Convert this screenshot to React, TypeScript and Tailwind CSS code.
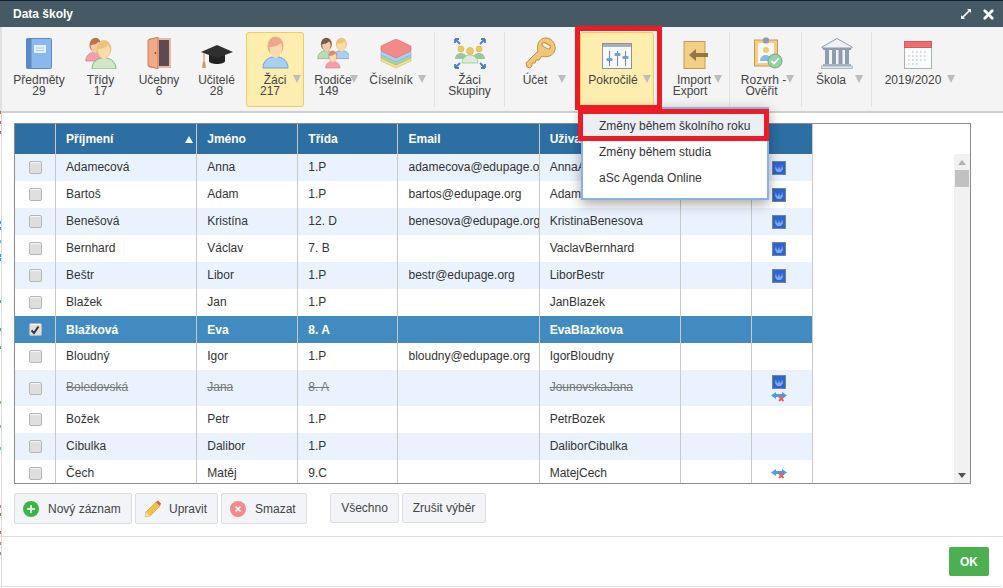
import type { ReactNode } from "react";
import { X } from "lucide-react";

const font = { fontFamily: '"Liberation Sans", Arial, sans-serif' };

function Person({ x, y, s, skin, hair, body, line }: { x: number; y: number; s: number; skin: string; hair: string; body: string; line: string }) {
  return (
    <g transform={`translate(${x} ${y}) scale(${s})`}>
      <path d="M1 30c0-7 5-10 9-11h6c4 1 9 4 9 11z" fill={body} stroke={line} strokeWidth="1" />
      <ellipse cx="13" cy="10" rx="7.5" ry="9" fill={hair} />
      <path d="M7 10c3 0 8-1 10-4 1 2 2 3 2 5 0 5-3 9-6 9s-6-5-6-10z" fill={skin} />
    </g>
  );
}

const BookIcon = () => (
  <svg width="26" height="31" viewBox="0 0 26 31">
    <rect x="0.5" y="0.5" width="25" height="30" rx="1" fill="#8ab7ee" stroke="#5a8ac6" />
    <rect x="0.5" y="0.5" width="5" height="30" fill="#5a8ac6" />
    <rect x="8" y="7" width="12" height="8" fill="#e8f1fb" />
    <path d="M10 10h8M10 12.5h8" stroke="#a9c7ea" />
  </svg>
);

const ClassIcon = () => (
  <svg width="32" height="32" viewBox="0 0 32 32">
    <Person x={0} y={0} s={0.8} skin="#f6c9a8" hair="#b8764a" body="#f0a0a8" line="#d9808a" />
    <Person x={6} y={2} s={1} skin="#fbdca8" hair="#edc27a" body="#cfe8c8" line="#7fb27f" />
  </svg>
);

const DoorIcon = () => (
  <svg width="24" height="32" viewBox="0 0 24 32">
    <rect x="2" y="1" width="22" height="30" fill="#e6b9a6" />
    <rect x="12" y="3" width="10" height="26" fill="#5f4a4f" />
    <path d="M1 3 11 0v32L1 29z" fill="#f2a987" stroke="#b96f4f" strokeWidth="0.8" />
    <circle cx="8.5" cy="16" r="0.9" fill="#7a4632" />
  </svg>
);

const CapIcon = () => (
  <svg width="32" height="26" viewBox="0 0 32 26">
    <path d="M8 11v7c0 2 4 3 8 3s8-1 8-3v-7z" fill="#222" />
    <path d="M16 2 32 9 16 15 0 9z" fill="#2f2f2f" />
    <path d="M3 10v9" stroke="#b98a52" strokeWidth="1" />
    <path d="M1.8 19h2.4l.6 6H1.200z" fill="#c79a60" />
  </svg>
);

const StudentIcon = () => (
  <svg width="27" height="33" viewBox="0 0 27 33">
    <path d="M1 32c0-7 5-10 9-11h7c4 1 9 4 9 11z" fill="#a9cff2" stroke="#6ea0d2" />
    <ellipse cx="13.500" cy="10" rx="8" ry="9.500" fill="#eba98c" />
    <path d="M7.500 11c3 0 9-1 11-4 1 1 1.500 3 1.500 5 0 5-3 10-6.500 10S7.500 17 7.500 11z" fill="#fbdca8" />
  </svg>
);

const ParentsIcon = () => (
  <svg width="32" height="32" viewBox="0 0 32 32">
    <Person x={0} y={0} s={0.72} skin="#f6c9a8" hair="#7c5a44" body="#b7dcb8" line="#7fb27f" />
    <Person x={15} y={0} s={0.72} skin="#fbdca8" hair="#edc27a" body="#a9cff2" line="#6ea0d2" />
    <Person x={8} y={13} s={0.6} skin="#fbdca8" hair="#d98c6a" body="#f0a0a8" line="#d9808a" />
  </svg>
);

const StackIcon = () => (
  <svg width="32" height="30" viewBox="0 0 32 30">
    <path d="M16 12 31 19v3L16 29 1 22v-3z" fill="#f4e08a" stroke="#d5bd5a" strokeWidth="0.6" />
    <path d="M16 9 31 16v3L16 26 1 19v-3z" fill="#a8d5a8" stroke="#84b884" strokeWidth="0.6" />
    <path d="M16 6 31 13v3L16 23 1 16v-3z" fill="#a9cff2" stroke="#7fabd6" strokeWidth="0.6" />
    <path d="M16 0 31 7v5L16 19 1 12V7z" fill="#f28a8a" stroke="#d96a6a" strokeWidth="0.6" />
  </svg>
);

const GroupsIcon = () => (
  <svg width="32" height="31" viewBox="0 0 32 31">
    <path d="M1 1l5 5M1 1h4M1 1v4M31 1l-5 5M31 1h-4M31 1v4M1 30l5-5M1 30h4M1 30v-4M31 30l-5-5M31 30h-4M31 30v-4" stroke="#4a7fc0" strokeWidth="1.800" fill="none" />
    <circle cx="7" cy="11" r="3" fill="#edc95e" stroke="#c9a53e" strokeWidth="0.5" />
    <circle cx="16" cy="13" r="3.500" fill="#edc95e" stroke="#c9a53e" strokeWidth="0.5" />
    <circle cx="25" cy="11" r="3" fill="#edc95e" stroke="#c9a53e" strokeWidth="0.5" />
    <path d="M1 21c0-4 3-6 6-6s6 2 6 6zM19 21c0-4 3-6 6-6s6 2 6 6z" fill="#9cc79c" />
    <path d="M8 25c0-5 4-8 8-8s8 3 8 8z" fill="#d8eed8" stroke="#8fbf8f" strokeWidth="0.7" />
  </svg>
);

const KeyIcon = () => (
  <svg width="31" height="32" viewBox="0 0 31 32">
    <path d="M12 15 1 26l1 4 3 1 2-2v-3h3l1-3h3l3-4c5 2 11 0 13-6 1-5-2-11-8-12-7-1-11 6-9 14z" fill="#f0c677" stroke="#bd9243" />
    <rect x="17" y="6.500" width="9" height="4" rx="2" transform="rotate(30 21 8)" fill="#f4f4f4" stroke="#bd9243" />
  </svg>
);

const SlidersIcon = () => (
  <svg width="30" height="26" viewBox="0 0 30 26">
    <rect x="0.500" y="0.500" width="29" height="25" fill="#f6f8fb" stroke="#8b95a1" />
    <rect x="1" y="1" width="28" height="3" fill="#a7aeb8" />
    <path d="M7.500 8v15M15.500 8v15M23.500 8v15" stroke="#7d8794" />
    <rect x="4.500" y="15" width="6" height="3" rx="1" fill="#6ba0d8" />
    <rect x="12.500" y="10" width="6" height="3" rx="1" fill="#6ba0d8" />
    <rect x="20.500" y="13" width="6" height="3" rx="1" fill="#6ba0d8" />
  </svg>
);

const ImportIcon = () => (
  <svg width="26" height="28" viewBox="0 0 26 28">
    <rect x="1" y="0.500" width="21" height="27" fill="#f3cf86" stroke="#c49a52" />
    <path d="M6 14l7-6v4h12v4H13v4z" fill="#957547" />
  </svg>
);

const ClipboardIcon = () => (
  <svg width="29" height="32" viewBox="0 0 29 32">
    <rect x="0.500" y="3" width="23" height="26" fill="#f3cf86" stroke="#c49a52" />
    <rect x="4" y="6" width="16" height="20" fill="#f8f8f8" />
    <rect x="9" y="0.500" width="6" height="6" rx="2" fill="#8e9bab" />
    <circle cx="12" cy="13" r="3" fill="#f2cb67" />
    <path d="M6 24c0-4 3-6 6-6s6 2 6 6z" fill="#8ab7ee" />
    <circle cx="21" cy="24" r="7" fill="#9ad0a5" stroke="#6fa97e" />
    <path d="M17.500 24l2.500 2.500 4.500-5" stroke="#fff" strokeWidth="1.800" fill="none" />
  </svg>
);

const BankIcon = () => (
  <svg width="32" height="31" viewBox="0 0 32 31">
    <path d="M16 0.500 31 9v1H1V9z" fill="#eef2f6" stroke="#8d9cae" />
    <rect x="2" y="10" width="28" height="2" fill="#8d9cae" />
    <path d="M4 12h4v14H4zM11 12h4v14h-4zM17.500 12h4v14h-4zM24 12h4v14h-4z" fill="#8d9cae" />
    <rect x="2" y="26" width="28" height="2" fill="#a9b5c3" />
    <rect x="0.500" y="28" width="31" height="2.500" fill="#dde3ea" stroke="#8d9cae" strokeWidth="0.6" />
  </svg>
);

const CalendarIcon = () => (
  <svg width="28" height="28" viewBox="0 0 28 28">
    <rect x="0.500" y="0.500" width="27" height="27" fill="#fafbfc" stroke="#a7b0bb" />
    <rect x="0.500" y="0.500" width="27" height="6" fill="#ee6e6e" stroke="#d85a5a" />
    <path d="M8 11h16M4 15h20M4 19h20M4 23h12" stroke="#c3cbd5" strokeWidth="1.500" strokeDasharray="1.500 2.500" />
  </svg>
);

type ToolItem = {
  icon: ReactNode;
  lines: { text: string; cls?: string }[];
  width: string;
  iconCls?: string;
  arrow?: string;
  active?: boolean;
};

const tools: (ToolItem | "sep")[] = [
  { icon: <BookIcon />, lines: [{ text: "Předměty" }, { text: "29" }], width: "w-[62px]" },
  { icon: <ClassIcon />, lines: [{ text: "Třídy" }, { text: "17" }], width: "w-[61px]" },
  { icon: <DoorIcon />, lines: [{ text: "Učebny" }, { text: "6" }], width: "w-[56px]" },
  { icon: <CapIcon />, lines: [{ text: "Učitelé" }, { text: "28" }], width: "w-[59px]" },
  { icon: <StudentIcon />, lines: [{ text: "Žáci" }, { text: "217", cls: "pr-[10px]" }], width: "w-[58px]", arrow: "left-[46px]", active: true },
  { icon: <ParentsIcon />, lines: [{ text: "Rodiče" }, { text: "149", cls: "pr-[9px]" }], width: "w-[58px]", arrow: "left-[45px]" },
  { icon: <StackIcon />, lines: [{ text: "Číselník", cls: "pr-[14px]" }], width: "w-[72px]", iconCls: "pr-[4px]", arrow: "left-[55px]" },
  "sep",
  { icon: <GroupsIcon />, lines: [{ text: "Žáci" }, { text: "Skupiny" }], width: "w-[69px]" },
  "sep",
  { icon: <KeyIcon />, lines: [{ text: "Účet", cls: "pr-[10px]" }], width: "w-[70px]", arrow: "left-[52px]" },
  { icon: <SlidersIcon />, lines: [{ text: "Pokročilé", cls: "pr-[8px]" }], width: "w-[74px] mx-[5px]", arrow: "left-[62px]", active: true },
  { icon: <ImportIcon />, lines: [{ text: "Import" }, { text: "Export", cls: "pr-[8px]" }], width: "w-[70px]", iconCls: "pl-[3px]", arrow: "left-[54px]" },
  "sep",
  { icon: <ClipboardIcon />, lines: [{ text: "Rozvrh -", cls: "pr-[4px]" }, { text: "Ověřit", cls: "pr-[8px]" }], width: "w-[71px]", iconCls: "pl-[5px]", arrow: "left-[55px]" },
  "sep",
  { icon: <BankIcon />, lines: [{ text: "Škola", cls: "pr-[11px]" }], width: "w-[69px]", arrow: "left-[52px]" },
  "sep",
  { icon: <CalendarIcon />, lines: [{ text: "2019/2020", cls: "pr-[10px]" }], width: "w-[92px]", arrow: "left-[74px]" },
];

const rows = [
  { last: "Adamecová", first: "Anna", cls: "1.P", email: "adamecova@edupage.org", user: "AnnaAdamecova", web: true },
  { last: "Bartoš", first: "Adam", cls: "1.P", email: "bartos@edupage.org", user: "AdamBartos", web: true },
  { last: "Benešová", first: "Kristína", cls: "12. D", email: "benesova@edupage.org", user: "KristinaBenesova", web: true },
  { last: "Bernhard", first: "Václav", cls: "7. B", email: "", user: "VaclavBernhard", web: true },
  { last: "Beštr", first: "Libor", cls: "1.P", email: "bestr@edupage.org", user: "LiborBestr", web: true },
  { last: "Blažek", first: "Jan", cls: "1.P", email: "", user: "JanBlazek" },
  { last: "Blažková", first: "Eva", cls: "8. A", email: "", user: "EvaBlazkova", selected: true },
  { last: "Bloudný", first: "Igor", cls: "1.P", email: "bloudny@edupage.org", user: "IgorBloudny" },
  { last: "Boledovská", first: "Jana", cls: "8. A", email: "", user: "JounovskaJana", web: true, link: true, removed: true },
  { last: "Božek", first: "Petr", cls: "1.P", email: "", user: "PetrBozek" },
  { last: "Cibulka", first: "Dalibor", cls: "1.P", email: "", user: "DaliborCibulka" },
  { last: "Čech", first: "Matěj", cls: "9.C", email: "", user: "MatejCech", link: true },
];

// barevné kousky stránky, která prosvítá za levým okrajem dialogu
const edgeTicks = [
  { top: "top-[111px]", color: "bg-[#e0544c]" },
  { top: "top-[121px]", color: "bg-[#e0544c]" },
  { top: "top-[131px]", color: "bg-[#e0544c]" },
  { top: "top-[221px]", color: "bg-[#2d9bf0]" },
  { top: "top-[227px]", color: "bg-[#2d9bf0]" },
  { top: "top-[240px]", color: "bg-[#6db3f5]" },
  { top: "top-[254px]", color: "bg-[#14a8f0]" },
  { top: "top-[258px]", color: "bg-[#14a8f0]" },
  { top: "top-[300px]", color: "bg-[#3fb56e]" },
  { top: "top-[328px]", color: "bg-[#3fb56e]" },
  { top: "top-[346px]", color: "bg-[#3fb56e]" },
  { top: "top-[401px]", color: "bg-[#5fd08a]" },
  { top: "top-[425px]", color: "bg-[#5fd08a]" },
  { top: "top-[447px]", color: "bg-[#5fd08a]" },
  { top: "top-[505px]", color: "bg-[#e86a5c]" },
  { top: "top-[513px]", color: "bg-[#e0544c]" },
  { top: "top-[531px]", color: "bg-[#f0594c]" },
  { top: "top-[542px]", color: "bg-[#e86a5c]" },
  { top: "top-[552px]", color: "bg-[#e86a5c]" },
];

function WebIcon() {
  return (
    <svg width="14" height="14" viewBox="0 0 14 14" className="block">
      <rect x="0.500" y="0.500" width="13" height="13" fill="#2f63cf" stroke="#75839a" />
      <path d="M4 3.500c0 3 1 4.500 1.800 4.500S6.500 5 7 5s.5 3 1.200 3S10 6 10 3.500l1 4.500-2 3H5L3 8z" fill="#7da7f0" />
    </svg>
  );
}

function LinkOffIcon() {
  return (
    <svg width="16" height="11" viewBox="0 0 16 11" className="block">
      <path d="M0 4.500 5 1v2h6V1l5 3.500L11 8V6H5v2z" fill="#4b9be8" />
      <path d="M8 5.500l4.500 4.500M12.500 5.500 8 10" stroke="#ee5a5a" strokeWidth="1.800" />
    </svg>
  );
}

function Checkbox({ checked }: { checked?: boolean }) {
  return (
    <span className="flex h-[13px] w-[13px] items-center justify-center rounded-[2px] border border-[#b5b5b5] bg-[#dedede] shadow-[inset_0_1px_1px_rgba(255,255,255,0.8)]">
      {checked ? (
        <svg width="10" height="10" viewBox="0 0 10 10">
          <path d="M1.500 5.500 4 8l4.500-6.500" stroke="#333" strokeWidth="2" fill="none" />
        </svg>
      ) : null}
    </span>
  );
}

function Triangle({ className }: { className: string }) {
  return <span className={`absolute top-[42px] h-0 w-0 border-x-[4.5px] border-t-[8px] border-x-transparent border-t-[#bcbcbc] ${className}`} />;
}

function FootButton({ children, className }: { children: ReactNode; className: string }) {
  return (
    <button className={`flex items-center rounded-[2px] border border-[#dcdde2] bg-[#f3f4f8] text-[12px] text-[#444] ${className}`}>{children}</button>
  );
}

export default function App() {
  return (
    <div className="relative h-[588px] w-[1003px] overflow-hidden bg-white text-[12px] text-[#333]" style={font}>
      <div className="flex h-[27px] items-center justify-between border-t border-[#0e2233] bg-[#455a64] pl-[13px] pr-[7px] text-white">
        <span className="text-[12px] font-bold">Data školy</span>
        <div className="flex items-center gap-[10px]">
          <svg width="10" height="10" viewBox="0 0 10 10">
            <path d="M6 0h4v4L8.600 2.600 2.600 8.600 4 10H0V6l1.400 1.400 6-6z" fill="#fff" />
          </svg>
          <X size={15} strokeWidth={4.5} />
        </div>
      </div>

      <div className="flex h-[86px] border-b-2 border-l-2 border-b-[#cfcfcf] border-l-[#e0e0e0] bg-[#f4f4f4] pl-[6px] pt-[5px]">
        {tools.map((item, i) =>
          item === "sep" ? (
            <div key={i} className="h-[75px] w-px bg-[#e3e3e3]" />
          ) : (
            <div
              key={i}
              className={`relative box-border h-[75px] shrink-0 rounded-[3px] border text-center text-[12px] leading-[11px] text-[#444] ${item.width} ${item.active ? "border-[#f5c95c] bg-[#fdeeb0]" : "border-transparent"}`}
            >
              <div className={`flex h-[36px] items-end justify-center ${item.iconCls ?? ""}`}>{item.icon}</div>
              <div className="pt-[6px]">
                {item.lines.map((line) => (
                  <div key={line.text} className={line.cls}>
                    {line.text}
                  </div>
                ))}
              </div>
              {item.arrow ? <Triangle className={item.arrow} /> : null}
            </div>
          ),
        )}
      </div>

      <div className="mx-[14px] mt-[10px] flex h-[361px] w-[957px] overflow-hidden border border-[#8c8c8c]">
        <table className="h-fit w-[798px] shrink-0 table-fixed border-separate border-spacing-0">
          <colgroup>
            <col className="w-[41px]" />
            <col className="w-[141px]" />
            <col className="w-[101px]" />
            <col className="w-[100px]" />
            <col className="w-[141px]" />
            <col className="w-[141px]" />
            <col className="w-[71px]" />
            <col className="w-[61px]" />
          </colgroup>
          <thead>
            <tr className="h-[30px] bg-[#2d6fa3] text-left text-[12px] font-bold text-white">
              <th className="border-r border-[#c9c9c9]" />
              <th className="relative border-r border-[#c9c9c9] pl-[10px]">
                Příjmení
                <span className="absolute right-[3px] top-[12px] h-0 w-0 border-x-[4px] border-b-[7px] border-x-transparent border-b-white" />
              </th>
              <th className="border-r border-[#c9c9c9] pl-[10px]">Jméno</th>
              <th className="border-r border-[#c9c9c9] pl-[10px]">Třída</th>
              <th className="border-r border-[#c9c9c9] pl-[10px]">Email</th>
              <th className="border-r border-[#c9c9c9] pl-[10px]">Uživatel</th>
              <th className="border-r border-[#c9c9c9]" />
              <th className="border-r border-[#c9c9c9]" />
            </tr>
          </thead>
          <tbody>
            {rows.map((r, i) => {
              const tone = r.selected ? "bg-[#428bc1] font-bold text-white" : i % 2 === 0 ? "bg-[#eaf3fd]" : "bg-white";
              const strike = r.removed ? "text-[#777] line-through" : "";
              const height = r.removed ? "h-[36px]" : "h-[27px]";
              const nudge = r.selected ? "" : "pb-[2px]";
              return (
                <tr key={r.last} className={`${height} ${tone}`}>
                  <td className="border-r border-[#c9c9c9]">
                    <div className="flex justify-center">
                      <Checkbox checked={r.selected} />
                    </div>
                  </td>
                  <td className={`border-r border-[#c9c9c9] pl-[10px] ${nudge} ${strike}`}>{r.last}</td>
                  <td className={`border-r border-[#c9c9c9] pl-[10px] ${nudge} ${strike}`}>{r.first}</td>
                  <td className={`border-r border-[#c9c9c9] pl-[10px] ${nudge} ${strike}`}>{r.cls}</td>
                  <td className={`overflow-hidden whitespace-nowrap border-r border-[#c9c9c9] pl-[10px] ${nudge} ${strike}`}>{r.email}</td>
                  <td className={`overflow-hidden whitespace-nowrap border-r border-[#c9c9c9] pl-[10px] ${nudge} ${strike}`}>{r.user}</td>
                  <td className="border-r border-[#c9c9c9]" />
                  <td className="border-r border-[#c9c9c9]">
                    <div className="flex flex-col items-center gap-[2px] pr-[6px]">
                      {r.web ? <WebIcon /> : null}
                      {r.link ? <LinkOffIcon /> : null}
                    </div>
                  </td>
                </tr>
              );
            })}
          </tbody>
        </table>
        <div className="flex-1" />
        <div className="mt-[30px] flex w-[16px] flex-col items-center bg-[#f1f1f1] pt-[6px]">
          <span className="h-0 w-0 border-x-[4px] border-b-[5px] border-x-transparent border-b-[#b0b0b0]" />
          <span className="mt-[5px] h-[17px] w-[14px] bg-[#c1c1c1]" />
          <span className="mt-auto mb-[5px] h-0 w-0 border-x-[4px] border-t-[5px] border-x-transparent border-t-[#505050]" />
        </div>
      </div>

      <div className="ml-[14px] mt-[9px] flex items-start">
        <FootButton className="h-[31px] w-[118px] pl-[8px]">
          <svg width="16" height="16" viewBox="0 0 16 16">
            <circle cx="8" cy="8" r="8" fill="#39b54a" />
            <path d="M8 4v8M4 8h8" stroke="#d9f5dd" strokeWidth="2" />
          </svg>
          <span className="ml-[9px]">Nový záznam</span>
        </FootButton>
        <FootButton className="ml-[3px] h-[31px] w-[83px] pl-[8px]">
          <svg width="18" height="18" viewBox="0 0 18 18">
            <path d="M1 17l1-5L12 2l4 4L6 16z" fill="#f5c242" stroke="#c8962a" strokeWidth="0.6" />
            <path d="M12 2l2-1.500 3 3L16 6z" fill="#e0574f" />
            <path d="M1 17l1-5 4 4z" fill="#f4dcb4" />
          </svg>
          <span className="ml-[7px]">Upravit</span>
        </FootButton>
        <FootButton className="ml-[3px] h-[31px] w-[86px] pl-[8px]">
          <svg width="16" height="16" viewBox="0 0 16 16">
            <circle cx="8" cy="8" r="8" fill="#f28b8b" />
            <path d="M5.500 5.500l5 5M10.500 5.500l-5 5" stroke="#fff" strokeWidth="1.500" />
          </svg>
          <span className="ml-[9px]">Smazat</span>
        </FootButton>
        <FootButton className="ml-[23px] h-[30px] w-[69px] justify-center">Všechno</FootButton>
        <FootButton className="ml-[3px] h-[30px] w-[84px] justify-center">Zrušit výběr</FootButton>
      </div>

      <div className="mt-[12px] flex h-[51px] justify-end rounded-b-[3px] border-y border-[#dedede] pr-[14px] pt-[10px]">
        <button className="h-[29px] w-[40px] rounded-[2px] bg-[#4caf50] text-[12px] font-bold text-white">OK</button>
      </div>

      {/* otevřené menu a červené značky leží přes obsah */}
      <div className="absolute left-[581px] top-[107px] flex h-[93px] w-[188px] flex-col border-2 border-[#8ab0e8] bg-white pt-[4px] text-[12px] text-[#333] shadow-[0_4px_12px_rgba(0,0,0,0.35)]">
        <div className="flex h-[26px] items-center bg-[#ebeef3] pl-[16px]">Změny během školního roku</div>
        <div className="flex h-[26px] items-center pl-[16px]">Změny během studia</div>
        <div className="flex h-[26px] items-center pl-[16px]">aSc Agenda Online</div>
      </div>
      <div className="absolute left-[575px] top-[26px] h-[84px] w-[87px] border-[5px] border-[#ed1c24]" />
      <div className="absolute left-[578px] top-[109px] h-[32px] w-[191px] border-[5px] border-[#ed1c24]" />

      <div className="absolute bottom-0 left-[1px] top-[112px] w-px bg-[#dcdcdc]" />
      {edgeTicks.map((tick) => (
        <span key={tick.top} className={`absolute left-0 h-[3px] w-px ${tick.top} ${tick.color}`} />
      ))}
    </div>
  );
}
